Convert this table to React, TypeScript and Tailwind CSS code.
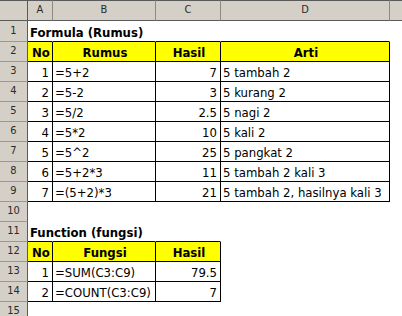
import type { ReactNode } from 'react';

type Kind = 'blank' | 'top' | 'box' | 'head';

const grid = 'grid grid-cols-[28px_25px_103px_65px_169px_1fr]';

const kindClass: Record<Kind, string> = {
  blank: 'border-transparent',
  top: 'border-r-transparent border-b-black',
  box: 'border-black bg-white',
  head: 'border-black bg-[#ffff00] font-bold justify-center',
};

function Cell({
  kind = 'blank',
  right,
  bold,
  children,
}: {
  kind?: Kind;
  right?: boolean;
  bold?: boolean;
  children?: ReactNode;
}) {
  return (
    <div
      className={`flex items-end whitespace-nowrap border-r border-b text-[13px] leading-[16px] text-black ${kindClass[kind]} ${
        right ? 'justify-end pr-[3px]' : 'pl-[2px]'
      } ${bold ? 'font-bold' : ''}`}
    >
      {children}
    </div>
  );
}

function RowHead({ n }: { n: number }) {
  return (
    <div className="flex items-center justify-center border-r border-b border-r-[#5a5a5a] border-b-[#9b9890] bg-[#d4d0c8] text-[11px] text-[#2a2a2a]">
      {n}
    </div>
  );
}

function Row({ n, h = 'h-[20px]', children }: { n: number; h?: string; children?: ReactNode }) {
  return (
    <div className={`${grid} ${h}`}>
      <RowHead n={n} />
      {children}
    </div>
  );
}

const formulas = [
  ['=5+2', '7', '5 tambah 2'],
  ['=5-2', '3', '5 kurang 2'],
  ['=5/2', '2.5', '5 nagi 2'],
  ['=5*2', '10', '5 kali 2'],
  ['=5^2', '25', '5 pangkat 2'],
  ['=5+2*3', '11', '5 tambah 2 kali 3'],
  ['=(5+2)*3', '21', '5 tambah 2, hasilnya kali 3'],
];

const functions = [
  ['=SUM(C3:C9)', '79.5'],
  ['=COUNT(C3:C9)', '7'],
];

export default function App() {
  return (
    <div className="h-[316px] w-[402px] overflow-hidden bg-white [font-family:'DejaVu_Sans_Condensed','DejaVu_Sans',sans-serif]">
      {/* column letters */}
      <div className={`${grid} h-[21px]`}>
        <div className="border-t border-r border-b border-[#5a5a5a] bg-[#d4d0c8]" />
        {['A', 'B', 'C', 'D', 'E'].map((c, i) => (
          <div
            key={c}
            className={`flex items-center justify-center border-t border-b border-[#5a5a5a] bg-[#d4d0c8] text-[11px] text-[#2a2a2a] ${
              i < 4 ? 'border-r border-r-[#8c8a84]' : ''
            }`}
          >
            {c === 'E' ? '' : c}
          </div>
        ))}
      </div>

      <Row n={1} h="h-[21px]">
        <Cell kind="top" bold>
          Formula (Rumus)
        </Cell>
        <Cell kind="top" />
        <Cell kind="top" />
        <Cell kind="top" />
        <Cell />
      </Row>
      <Row n={2}>
        <Cell kind="head">No</Cell>
        <Cell kind="head">Rumus</Cell>
        <Cell kind="head">Hasil</Cell>
        <Cell kind="head">Arti</Cell>
        <Cell />
      </Row>
      {formulas.map(([rumus, hasil, arti], i) => (
        <Row key={rumus} n={i + 3}>
          <Cell kind="box" right>
            {i + 1}
          </Cell>
          <Cell kind="box">{rumus}</Cell>
          <Cell kind="box" right>
            {hasil}
          </Cell>
          <Cell kind="box">{arti}</Cell>
          <Cell />
        </Row>
      ))}
      <Row n={10}>
        <Cell />
        <Cell />
        <Cell />
        <Cell />
        <Cell />
      </Row>
      <Row n={11}>
        <Cell kind="top" bold>
          Function (fungsi)
        </Cell>
        <Cell kind="top" />
        <Cell kind="top" />
        <Cell />
        <Cell />
      </Row>
      <Row n={12}>
        <Cell kind="head">No</Cell>
        <Cell kind="head">Fungsi</Cell>
        <Cell kind="head">Hasil</Cell>
        <Cell />
        <Cell />
      </Row>
      {functions.map(([fungsi, hasil], i) => (
        <Row key={fungsi} n={i + 13}>
          <Cell kind="box" right>
            {i + 1}
          </Cell>
          <Cell kind="box">{fungsi}</Cell>
          <Cell kind="box" right>
            {hasil}
          </Cell>
          <Cell />
          <Cell />
        </Row>
      ))}
      <Row n={15}>
        <Cell />
        <Cell />
        <Cell />
        <Cell />
        <Cell />
      </Row>
    </div>
  );
}
